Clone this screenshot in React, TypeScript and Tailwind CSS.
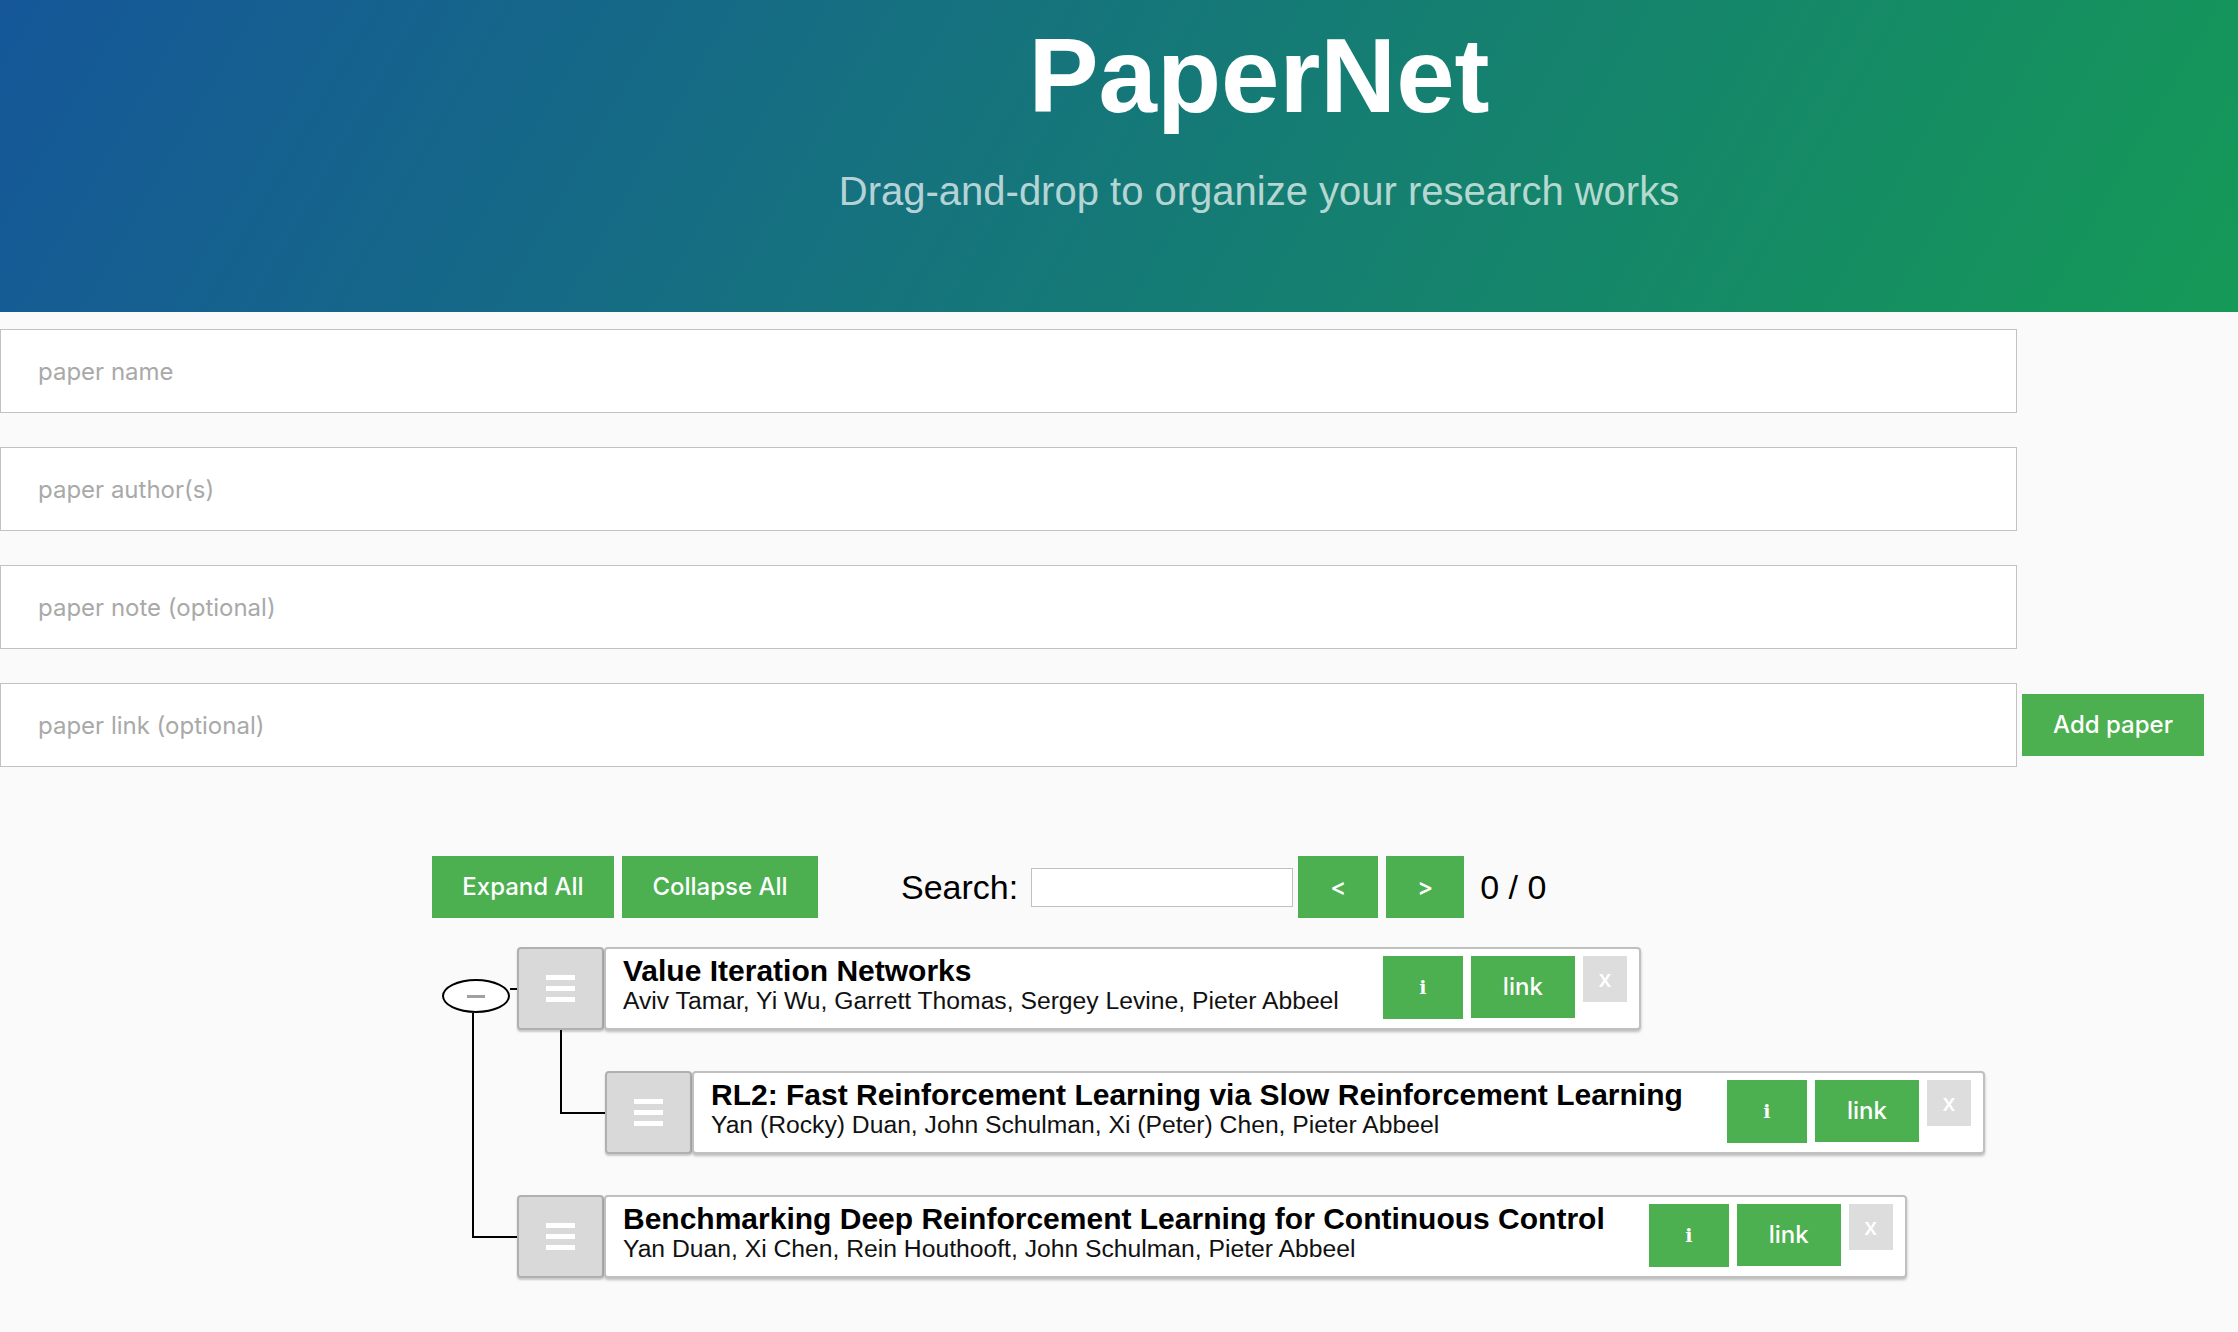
import React from "react";

type Paper = {
  title: string;
  authors: string;
};

const papers: Paper[] = [
  {
    title: "Value Iteration Networks",
    authors: "Aviv Tamar, Yi Wu, Garrett Thomas, Sergey Levine, Pieter Abbeel",
  },
  {
    title: "RL2: Fast Reinforcement Learning via Slow Reinforcement Learning",
    authors: "Yan (Rocky) Duan, John Schulman, Xi (Peter) Chen, Pieter Abbeel",
  },
  {
    title: "Benchmarking Deep Reinforcement Learning for Continuous Control",
    authors: "Yan Duan, Xi Chen, Rein Houthooft, John Schulman, Pieter Abbeel",
  },
];

function Field({ placeholder }: { placeholder: string }) {
  return (
    <input
      placeholder={placeholder}
      className="h-[84px] w-[2017px] shrink-0 border border-[#c2c2c2] bg-white pl-[37px] font-['Inter','Noto_Sans',sans-serif] text-[24px] text-[#333] outline-none placeholder:text-[#a9a9a9]"
    />
  );
}

function GreenButton({ children, className = "" }: { children: React.ReactNode; className?: string }) {
  return (
    <button
      className={`flex shrink-0 items-center justify-center bg-[#4caf50] font-['Inter','Noto_Sans',sans-serif] text-[24px] font-medium text-white ${className}`}
    >
      {children}
    </button>
  );
}

function Handle() {
  return (
    <div className="flex h-[83px] w-[87px] shrink-0 flex-col items-center justify-center gap-[6px] rounded-[4px] border-2 border-[#b0b0b0] bg-[#d9d9d9] shadow-[0_2px_2px_rgba(0,0,0,0.2)]">
      <span className="h-[5px] w-[29px] bg-white" />
      <span className="h-[5px] w-[29px] bg-white" />
      <span className="h-[5px] w-[29px] bg-white" />
    </div>
  );
}

function PaperCard({ paper, indent }: { paper: Paper; indent: boolean }) {
  return (
    <div className={`flex ${indent ? "pl-[605px]" : "pl-[517px]"}`}>
      <Handle />
      <div className="flex h-[83px] items-start rounded-[4px] border-2 border-[#c0c0c0] bg-white pl-[17px] pr-[12px] shadow-[0_2px_3px_rgba(0,0,0,0.25)]">
        <div className="mt-[6px] font-['Liberation_Sans',Arial,sans-serif] text-black">
          <div className="whitespace-nowrap text-[30px] font-bold leading-[32px]">{paper.title}</div>
          <div className="whitespace-nowrap text-[24.7px] leading-[28px] text-[#111]">{paper.authors}</div>
        </div>
        <div className="ml-[44px] mt-[7px] flex items-start">
          <GreenButton className="h-[63px] w-[80px]">
            <span className="font-['DejaVu_Serif',serif] text-[19px] font-bold">i</span>
          </GreenButton>
          <GreenButton className="ml-[8px] h-[62px] w-[104px]">link</GreenButton>
          <button className="ml-[8px] flex h-[46px] w-[44px] items-center justify-center bg-[#dddddd] font-['Inter','Noto_Sans',sans-serif] text-[24px] font-medium leading-none text-white">
            x
          </button>
        </div>
      </div>
    </div>
  );
}

export default function App() {
  return (
    <div className="min-h-screen bg-[#fafafa] pb-[60px]">
      {/* 页头 */}
      <header className="h-[312px] bg-[#159957] bg-[linear-gradient(120deg,#155799,#159957)] pl-[280px] text-center font-['Liberation_Sans',Arial,sans-serif]">
        <h1 className="pt-[23px] text-[105px] font-bold leading-none text-white">PaperNet</h1>
        <p className="mt-[43px] text-[40px] leading-none text-white/70">
          Drag-and-drop to organize your research works
        </p>
      </header>

      {/* 新增论文表单 */}
      <div className="mt-[17px] flex flex-col gap-[34px]">
        <Field placeholder="paper name" />
        <Field placeholder="paper author(s)" />
        <Field placeholder="paper note (optional)" />
        <div className="flex items-center gap-[5px]">
          <Field placeholder="paper link (optional)" />
          <GreenButton className="h-[62px] w-[182px]">Add paper</GreenButton>
        </div>
      </div>

      {/* 工具栏 */}
      <div className="mt-[89px] flex h-[62px] items-center pl-[432px] font-['Liberation_Sans',Arial,sans-serif]">
        <GreenButton className="h-[62px] w-[182px]">Expand All</GreenButton>
        <GreenButton className="ml-[8px] h-[62px] w-[196px]">Collapse All</GreenButton>
        <span className="ml-[83px] text-[34px] text-black">Search:</span>
        <input className="ml-[13px] h-[39px] w-[262px] border border-[#c0c0c0] bg-white px-2 text-[20px] outline-none" />
        <GreenButton className="ml-[5px] h-[62px] w-[80px]">&lt;</GreenButton>
        <GreenButton className="ml-[8px] h-[62px] w-[78px]">&gt;</GreenButton>
        <span className="ml-[16px] text-[34px] text-black">0 / 0</span>
      </div>

      {/* 论文树 */}
      <div className="relative mt-[29px]">
        {/* 连接线 */}
        <div className="absolute left-[472px] top-[66px] h-[225px] w-[2px] bg-black" />
        <div className="absolute left-[472px] top-[289px] h-[2px] w-[45px] bg-black" />
        <div className="absolute left-[510px] top-[41px] h-[2px] w-[7px] bg-black" />
        <div className="absolute left-[560px] top-[82px] h-[85px] w-[2px] bg-black" />
        <div className="absolute left-[560px] top-[165px] h-[2px] w-[45px] bg-black" />
        <div className="absolute left-[442px] top-[32px] flex h-[34px] w-[68px] items-center justify-center rounded-[50%] border-2 border-black bg-white">
          <span className="h-[3px] w-[18px] bg-[#a0a0a0]" />
        </div>

        <div className="relative flex flex-col gap-[41px]">
          {papers.map((p, i) => (
            <PaperCard key={p.title} paper={p} indent={i === 1} />
          ))}
        </div>
      </div>
    </div>
  );
}
